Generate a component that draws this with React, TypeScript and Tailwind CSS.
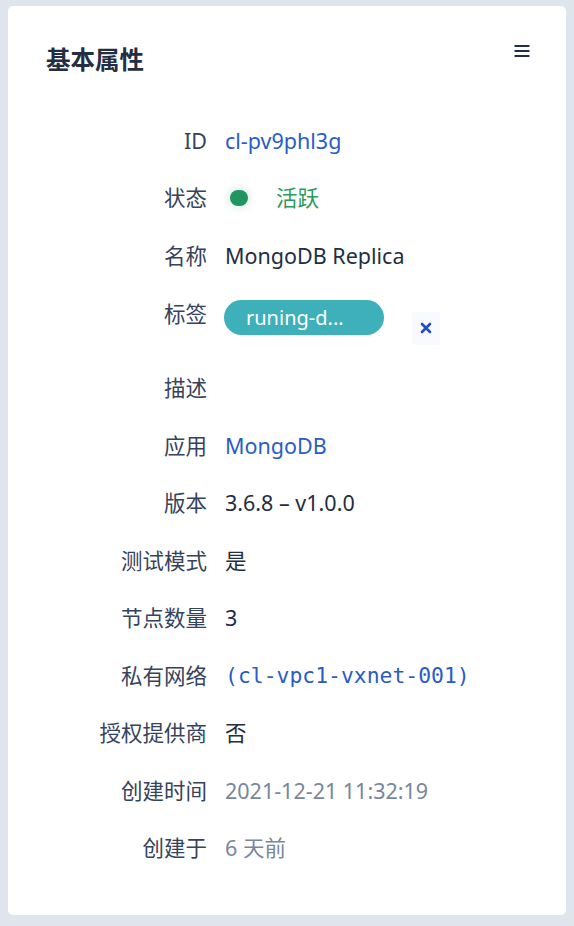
import React from 'react';

interface Row {
    label: string;
    value?: React.ReactNode;
}

const sans = 'font-["Noto_Sans","Noto_Sans_CJK_SC",sans-serif]';

const MenuIcon: React.FC = () => (
    <svg width="16" height="14" viewBox="0 0 16 14" className="text-[#242e42]">
        <rect x="0.5" y="1" width="15" height="2" rx="0.5" fill="currentColor" />
        <rect x="0.5" y="6" width="15" height="2" rx="0.5" fill="currentColor" />
        <rect x="0.5" y="11" width="15" height="2" rx="0.5" fill="currentColor" />
    </svg>
);

const App: React.FC = () => {
    const rowsTop: Row[] = [
        { label: 'ID', value: <span className="text-[#2a5cc6]">cl-pv9phl3g</span> },
        {
            label: '状态',
            value: (
                <span className="flex items-center">
                    <span className="ml-[5px] w-[18px] h-[16px] rounded-full bg-[#1f9660] shadow-[0_0_6px_3px_rgba(31,150,96,0.12)]" />
                    <span className="ml-[28px] text-[#2b9a5c]">活跃</span>
                </span>
            )
        },
        { label: '名称', value: 'MongoDB Replica' }
    ];

    const rowsBottom: Row[] = [
        { label: '描述' },
        { label: '应用', value: <span className="text-[#2a5cc6]">MongoDB</span> },
        { label: '版本', value: '3.6.8 – v1.0.0' },
        { label: '测试模式', value: '是' },
        { label: '节点数量', value: '3' },
        {
            label: '私有网络',
            value: (
                <span className='font-["DejaVu_Sans_Mono",monospace] text-[#2a5cc6] text-[21.4px]'>
                    (cl-vpc1-vxnet-001)
                </span>
            )
        },
        { label: '授权提供商', value: '否' },
        { label: '创建时间', value: <span className="text-[#79869b]">2021-12-21 11:32:19</span> },
        { label: '创建于', value: <span className="text-[#79869b]">6 天前</span> }
    ];

    const renderRow = (row: Row) => (
        <div key={row.label} className="flex items-center h-[57.5px]">
            <div className="w-[161px] text-right text-[#36435c] shrink-0">{row.label}</div>
            <div className="ml-[18px] text-[#242e42]">{row.value}</div>
        </div>
    );

    return (
        <div className={`bg-[#dee5ec] min-h-[926px] pt-[6px] px-[8px] ${sans}`}>
            <div className="bg-white rounded-[5px] h-[909px] pl-[38px] pr-[36px] pt-[38px]">
                {/* Header */}
                <div className="flex items-start justify-between h-[32px]">
                    <h1 className="text-[24.5px] leading-[32px] font-semibold text-[#242e42]">基本属性</h1>
                    <MenuIcon />
                </div>

                {/* Properties */}
                <div className="mt-[36px] text-[21.5px]">
                    {rowsTop.map(renderRow)}

                    {/* Tags */}
                    <div className="flex h-[75px]">
                        <div className="w-[161px] text-right text-[#36435c] shrink-0 leading-[57.5px]">标签</div>
                        <div className="ml-[17px] flex items-start pt-[15px]">
                            <span className="h-[35px] w-[160px] rounded-full bg-[#3eb0b9] text-white text-[20px] leading-[35px] pl-[22px]">
                                runing-d...
                            </span>
                            <button className="mt-[12px] ml-[28px] w-[28px] h-[33px] bg-[#f8fafd] rounded-[3px] flex items-center justify-center">
                                <svg width="12" height="12" viewBox="0 0 12 12">
                                    <path d="M2 2 L10 10 M10 2 L2 10" stroke="#1f4fc1" strokeWidth="2.6" strokeLinecap="round" />
                                </svg>
                            </button>
                        </div>
                    </div>

                    {rowsBottom.map(renderRow)}
                </div>
            </div>
        </div>
    );
};

export default App;
